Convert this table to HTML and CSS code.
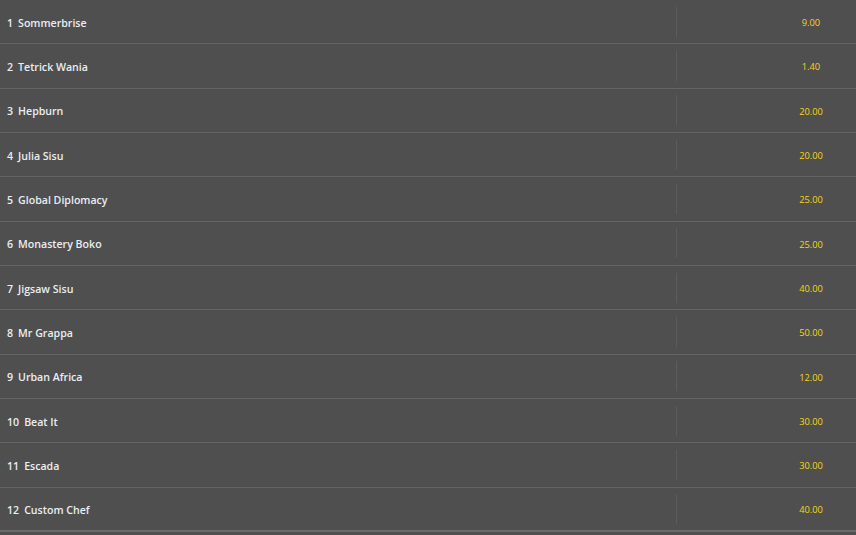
FILE: index.html
```html
<!DOCTYPE html>
<html lang="en">
<head>
  <meta charset="UTF-8">
  <title>Runners</title>
  <link rel="stylesheet" href="styles.css">
</head>
<body>
  <div class="runners">
    <div class="runner"><span class="num">1</span><span class="name">Sommerbrise</span><div class="odds-cell"><span class="odds">9.00</span></div></div>
    <div class="runner"><span class="num">2</span><span class="name">Tetrick Wania</span><div class="odds-cell"><span class="odds">1.40</span></div></div>
    <div class="runner"><span class="num">3</span><span class="name">Hepburn</span><div class="odds-cell"><span class="odds">20.00</span></div></div>
    <div class="runner"><span class="num">4</span><span class="name">Julia Sisu</span><div class="odds-cell"><span class="odds">20.00</span></div></div>
    <div class="runner"><span class="num">5</span><span class="name">Global Diplomacy</span><div class="odds-cell"><span class="odds">25.00</span></div></div>
    <div class="runner"><span class="num">6</span><span class="name">Monastery Boko</span><div class="odds-cell"><span class="odds">25.00</span></div></div>
    <div class="runner"><span class="num">7</span><span class="name">Jigsaw Sisu</span><div class="odds-cell"><span class="odds">40.00</span></div></div>
    <div class="runner"><span class="num">8</span><span class="name">Mr Grappa</span><div class="odds-cell"><span class="odds">50.00</span></div></div>
    <div class="runner"><span class="num">9</span><span class="name">Urban Africa</span><div class="odds-cell"><span class="odds">12.00</span></div></div>
    <div class="runner"><span class="num">10</span><span class="name">Beat It</span><div class="odds-cell"><span class="odds">30.00</span></div></div>
    <div class="runner"><span class="num">11</span><span class="name">Escada</span><div class="odds-cell"><span class="odds">30.00</span></div></div>
    <div class="runner"><span class="num">12</span><span class="name">Custom Chef</span><div class="odds-cell"><span class="odds">40.00</span></div></div>
  </div>
</body>
</html>
```

FILE: styles.css
```css
* {
  box-sizing: border-box;
}
body {
  margin: 0;
  height: 100vh;
  background: #4f4f4f;
  font-family: 'Open Sans', 'Noto Sans', sans-serif;
  overflow: hidden;
}
.runner {
  display: flex;
  align-items: center;
  height: 44.33px;
  padding-left: 7px;
  padding-top: 2px;
  border-bottom: 1px solid #646464;
}
.runner:last-child {
  border-bottom: 2px solid #6a6a6a;
}
.num {
  color: #eaeef2;
  font-size: 10.6px;
  font-weight: 600;
  margin-right: 5px;
}
.name {
  flex: 1;
  color: #eaeef2;
  font-size: 10.6px;
  font-weight: 600;
}
.odds-cell {
  width: 180px;
  height: 30px;
  margin-top: -2px;
  border-left: 1px solid #5c5c5c;
  display: flex;
  align-items: center;
  padding-left: 89px;
  padding-top: 2px;
}
.odds {
  width: 90px;
  text-align: center;
  color: #f7d417;
  font-size: 9.3px;
}
```
